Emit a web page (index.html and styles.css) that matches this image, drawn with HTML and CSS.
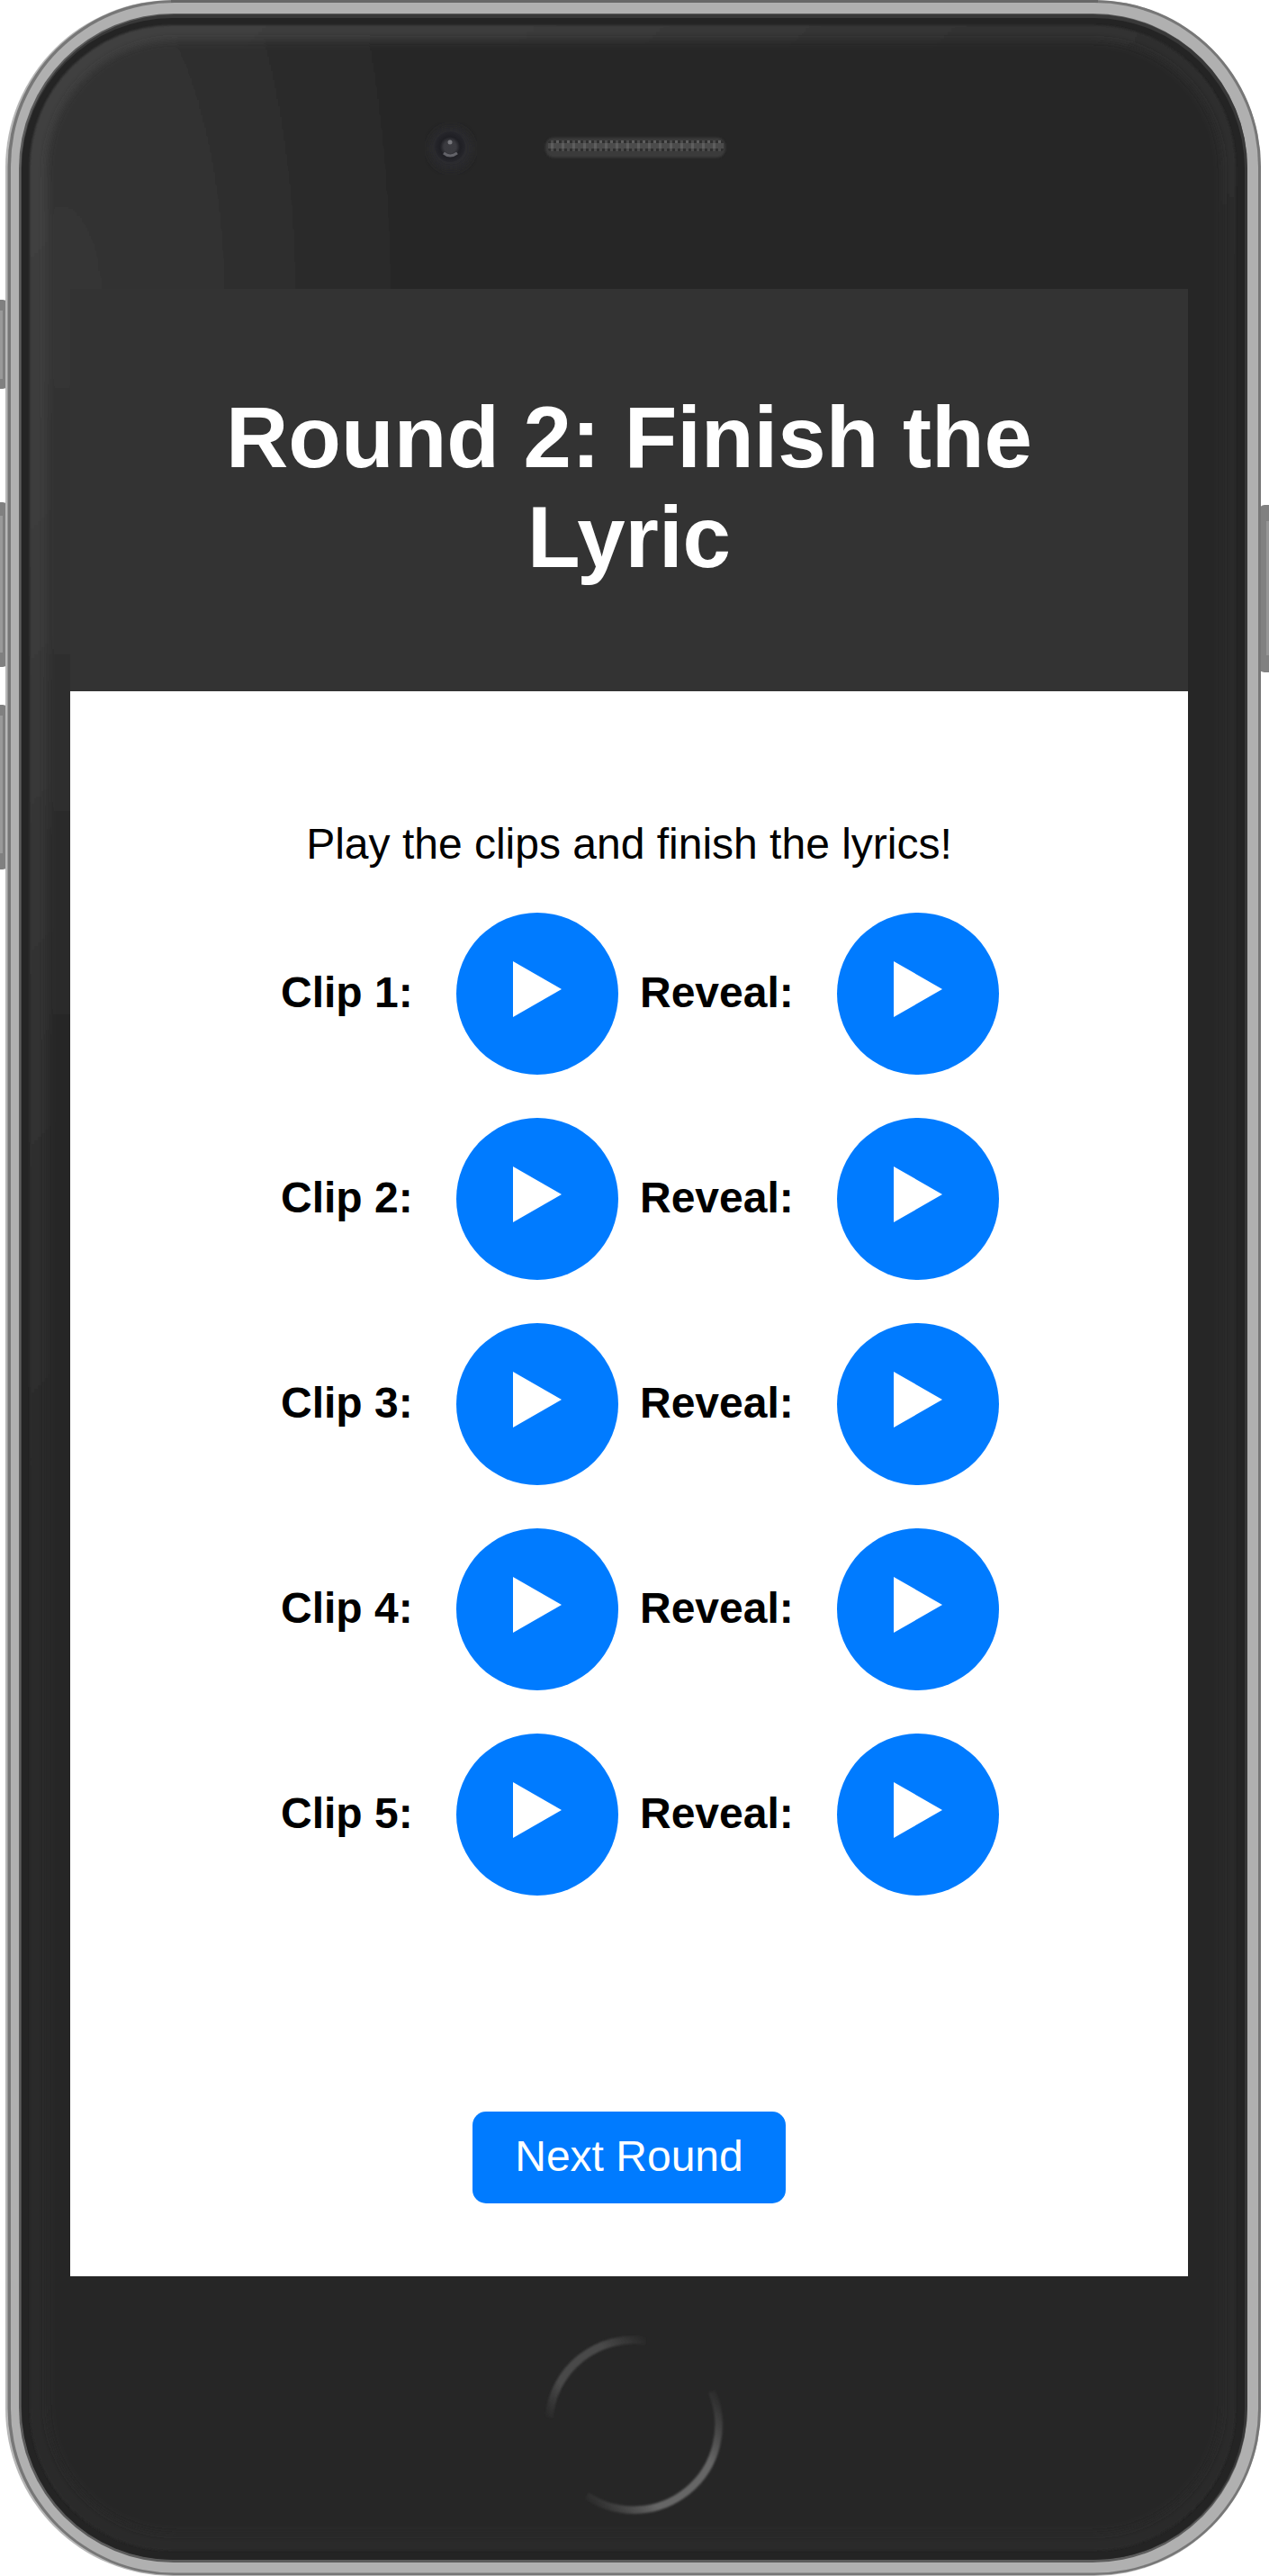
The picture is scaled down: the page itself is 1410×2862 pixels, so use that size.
FILE: index.html
```html
<!DOCTYPE html>
<html lang="en">
<head>
<meta charset="utf-8">
<title>Round 2: Finish the Lyric</title>
<link rel="stylesheet" href="styles.css">
</head>
<body>
<div class="device">
  <svg class="frame" width="1410" height="2862" viewBox="0 0 1410 2862" aria-hidden="true">
    <defs>
      <radialGradient id="shine" gradientUnits="userSpaceOnUse" cx="0" cy="0" r="1" gradientTransform="translate(60 330) scale(440 950)">
        <stop offset="0" stop-color="#353535"/>
        <stop offset=".4" stop-color="#303030"/>
        <stop offset="1" stop-color="#262626"/>
      </radialGradient>
      <linearGradient id="rim" gradientUnits="userSpaceOnUse" x1="0" y1="0" x2="1000" y2="1000">
        <stop offset="0" stop-color="#424242"/>
        <stop offset=".35" stop-color="#3b3b3b"/>
        <stop offset=".7" stop-color="#2e2e2e"/>
        <stop offset="1" stop-color="#2a2a2a"/>
      </linearGradient>
      <linearGradient id="arcTop" gradientUnits="userSpaceOnUse" x1="609" y1="2690" x2="720" y2="2598">
        <stop offset="0" stop-color="#484848" stop-opacity="0"/>
        <stop offset=".25" stop-color="#484848"/>
        <stop offset=".7" stop-color="#484848"/>
        <stop offset="1" stop-color="#484848" stop-opacity="0"/>
      </linearGradient>
      <linearGradient id="arcBottom" gradientUnits="userSpaceOnUse" x1="796" y1="2653" x2="648" y2="2778">
        <stop offset="0" stop-color="#666" stop-opacity="0"/>
        <stop offset=".3" stop-color="#666"/>
        <stop offset=".7" stop-color="#666"/>
        <stop offset="1" stop-color="#666" stop-opacity="0"/>
      </linearGradient>
      <radialGradient id="lens">
        <stop offset="0" stop-color="#3b3b40"/>
        <stop offset=".4" stop-color="#3a3a3f"/>
        <stop offset=".65" stop-color="#1f1f24"/>
        <stop offset="1" stop-color="#26262b"/>
      </radialGradient>
      <pattern id="mesh" width="12" height="12" patternUnits="userSpaceOnUse" x="609" y="156">
        <rect width="12" height="12" fill="#4b4b4b"/>
        <path d="M0 0h3v3h-3zM6 0h3v3h-3zM0 9h3v3h-3zM6 9h3v3h-3z" fill="#2f2f2f"/>
        <path d="M3 3h3v6h-3zM9 0h3v3h-3z" fill="#5d5d5d"/>
      </pattern>
      <filter id="soft"><feGaussianBlur stdDeviation="4"/></filter>
      <filter id="edge"><feGaussianBlur stdDeviation="1"/></filter>
    </defs>
    <g>
      <rect x="-20" y="333" width="29" height="99" rx="6" fill="#808080"/>
      <rect x="-20" y="558" width="29" height="183" rx="6" fill="#808080"/>
      <rect x="-20" y="783" width="29" height="183" rx="6" fill="#808080"/>
      <path d="M0 345h3v76H0zM0 573h3v152H0zM0 795h3v153H0z" fill="#999"/>
      <rect x="1399" y="561" width="30" height="186" rx="6" fill="#818181"/>
      <path d="M1407 579h3v149h-3z" fill="#969696"/>
    </g>
    <rect x="6" y="0" width="1395" height="2862" rx="186" fill="#b8b8b8"/>
    <rect x="8.500" y="0" width="1392.500" height="2861" rx="185" fill="#777"/>
    <path d="M190 0h1030v3H190z" fill="#686868"/>
    <rect x="12" y="3" width="1386" height="2855.500" rx="182" fill="#b0b0b0"/>
    <rect x="21" y="15" width="1365" height="2832" rx="172" fill="#5c5c5c"/>
    <rect x="23.500" y="16" width="1362.500" height="2828" rx="171" fill="#383838"/>
    <rect x="24" y="20" width="1359" height="2824" rx="168" fill="#242424"/>
    <rect x="33" y="28" width="1340" height="2806" rx="158" fill="url(#rim)" filter="url(#edge)"/>
    <rect x="52" y="45" width="1306" height="2770" rx="144" fill="url(#shine)" filter="url(#soft)"/>
    <circle cx="501" cy="165" r="24" fill="#29292d" filter="url(#soft)"/>
    <circle cx="500" cy="163" r="17" fill="url(#lens)"/>
    <circle cx="500" cy="158" r="2.500" fill="#77777c"/>
    <path d="M493 170q7 6 15 0" stroke="#626268" stroke-width="3" fill="none"/>
    <rect x="606" y="153" width="200" height="22" rx="9" fill="#3b3b3b" filter="url(#edge)"/>
    <rect x="609" y="156" width="195" height="12" rx="3" fill="url(#mesh)"/>
    <path d="M610 2686A94.500 94.500 0 0 1 718 2600.500" fill="none" stroke="url(#arcTop)" stroke-width="9" filter="url(#edge)"/>
    <path d="M791 2657A94.500 94.500 0 0 1 652 2773" fill="none" stroke="url(#arcBottom)" stroke-width="8.500" filter="url(#edge)"/>
  </svg>
  <main class="screen">
    <header class="header"><h1 class="title">Round 2: Finish the Lyric</h1></header>
    <section class="content">
      <p class="intro">Play the clips and finish the lyrics!</p>
      <div class="clips">
        <div class="clip"><b class="name">Clip 1:</b><button class="play" aria-label="Play clip 1"><svg class="icon" viewBox="0 0 54 62"><path d="M0 0 54 31 0 62z"/></svg></button><b class="reveal">Reveal:</b><button class="play" aria-label="Reveal clip 1"><svg class="icon" viewBox="0 0 54 62"><path d="M0 0 54 31 0 62z"/></svg></button></div>
        <div class="clip"><b class="name">Clip 2:</b><button class="play" aria-label="Play clip 2"><svg class="icon" viewBox="0 0 54 62"><path d="M0 0 54 31 0 62z"/></svg></button><b class="reveal">Reveal:</b><button class="play" aria-label="Reveal clip 2"><svg class="icon" viewBox="0 0 54 62"><path d="M0 0 54 31 0 62z"/></svg></button></div>
        <div class="clip"><b class="name">Clip 3:</b><button class="play" aria-label="Play clip 3"><svg class="icon" viewBox="0 0 54 62"><path d="M0 0 54 31 0 62z"/></svg></button><b class="reveal">Reveal:</b><button class="play" aria-label="Reveal clip 3"><svg class="icon" viewBox="0 0 54 62"><path d="M0 0 54 31 0 62z"/></svg></button></div>
        <div class="clip"><b class="name">Clip 4:</b><button class="play" aria-label="Play clip 4"><svg class="icon" viewBox="0 0 54 62"><path d="M0 0 54 31 0 62z"/></svg></button><b class="reveal">Reveal:</b><button class="play" aria-label="Reveal clip 4"><svg class="icon" viewBox="0 0 54 62"><path d="M0 0 54 31 0 62z"/></svg></button></div>
        <div class="clip"><b class="name">Clip 5:</b><button class="play" aria-label="Play clip 5"><svg class="icon" viewBox="0 0 54 62"><path d="M0 0 54 31 0 62z"/></svg></button><b class="reveal">Reveal:</b><button class="play" aria-label="Reveal clip 5"><svg class="icon" viewBox="0 0 54 62"><path d="M0 0 54 31 0 62z"/></svg></button></div>
      </div>
      <button class="next">Next Round</button>
    </section>
  </main>
</div>
</body>
</html>
```
FILE: styles.css
```css
* { box-sizing: border-box; }
body {
  margin: 0;
  background: #fff;
  color: #000;
  font: 48px/54px "Liberation Sans", Arial, sans-serif;
}
button { border: 0; padding: 0; font: inherit; color: #fff; background: #007bff; }
.device {
  position: relative;
  width: 1410px;
  height: 2862px;
  padding: 321px 90px 333px 78px;
  overflow: hidden;
}
.frame { position: absolute; inset: 0; display: block; }
.screen {
  position: relative;
  display: flex;
  flex-direction: column;
  height: 2208px;
  background: #fff;
}
.header {
  height: 447px;
  padding: 109px 60px 0;
  background: #333;
  text-align: center;
}
.title {
  margin: 0;
  color: #fff;
  font-size: 96px;
  line-height: 111px;
  font-weight: 700;
}
.content {
  flex: 1;
  display: flex;
  flex-direction: column;
  align-items: center;
  padding-top: 143px;
}
.intro { margin: 0 0 49px; }
.clips {
  display: flex;
  flex-direction: column;
  gap: 48px;
  width: 798px;
  margin-left: 24px;
}
.clip { display: flex; align-items: center; height: 180px; }
.name { flex: 0 0 195px; }
.reveal { flex: 0 0 219px; margin-left: 24px; }
.name, .reveal { white-space: nowrap; padding-bottom: 2px; }
.play {
  display: flex;
  flex: 0 0 180px;
  height: 180px;
  padding: 54px 0 0 63px;
  border-radius: 50%;
}
.icon { width: 54px; height: 62px; fill: #fff; }
.next {
  width: 348px;
  height: 102px;
  margin-top: 240px;
  padding-bottom: 3px;
  border-radius: 15px;
}
```
